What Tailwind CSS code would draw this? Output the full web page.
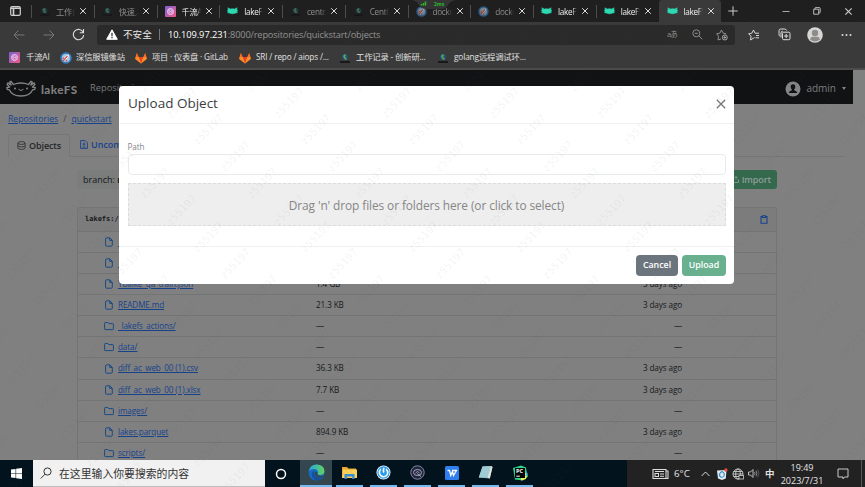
<!DOCTYPE html>
<html lang="zh">
<head>
<meta charset="utf-8">
<title>lakeFS</title>
<script src="https://cdn.jsdelivr.net/npm/@tailwindcss/browser@4"></script>
</head>
<body class="relative h-[487px] w-[865px] overflow-hidden bg-[#808080] font-['Open_Sans','Noto_Sans_CJK_SC',sans-serif] text-[9px] leading-none">
<svg class="absolute h-0 w-0">
  <defs><linearGradient id="g1" x2="1" y2="1"><stop stop-color="#7a62d8"/><stop offset="1" stop-color="#ee5a86"/></linearGradient></defs>
  <symbol id="earth" viewBox="0 0 10 10"><circle cx="5" cy="4" r="3" fill="#24527c"/><path d="M3 3Q5 0 6 2L5 4 7 6Q5 8 4 5Z" fill="#5cab4f"/><path d="M0 9h10" stroke="#111" stroke-width="1.6"/></symbol>
  <symbol id="axo" viewBox="0 0 12 8"><path d="M1 .5 3.500 1.800Q6 1.200 8.500 1.800L11 .5 10.700 3 11.800 3.600 10.800 4.500 11.300 5.800 9.500 6.200Q6 8 2.500 6.200L.7 5.800 1.200 4.500.2 3.600 1.300 3Z" fill="#2cd9b0" stroke="#2cd9b0" stroke-width=".6"/></symbol>
  <symbol id="fox" viewBox="0 0 12 12"><path d="M6 11.500 0 6.800 1.800.8 3.700 5h4.600L10.200.8 12 6.800Z" fill="#fc6d26"/><path d="M6 11.500 3.700 5h4.600Z" fill="#e24329"/><path d="M6 11.500 0 6.800 1.300 5h2.400ZM6 11.500l6-4.700L10.700 5H8.300Z" fill="#fca326" opacity=".6"/></symbol>
  <symbol id="ai" viewBox="0 0 12 12"><rect width="12" height="12" rx="1" fill="url(#g1)"/><circle cx="6" cy="6" r="3.300" fill="none" stroke="#f3d3f3"/><path d="M4 4.500 6 3.700 8 5v2L6 8.300 4.200 7ZM4 4.500 8 7M8 5 4.200 7" fill="none" stroke="#f3d3f3" stroke-width=".7"/></symbol>
  <symbol id="rocket" viewBox="0 0 12 12"><circle cx="6" cy="6" r="5.700" fill="#3480c4"/><circle cx="6" cy="6" r="4" fill="#a9c8e2"/><path d="M3 9Q4 4 9 2.500 8.500 7 3 9Z" fill="#fff"/><path d="M3 8.800 7.500 4M4 6l-1.500.5M6.500 8 6 9.500" stroke="#d3473a" stroke-width="1.200"/></symbol>
  <symbol id="x" viewBox="0 0 8 8"><path d="m1.200 1.200 5.600 5.600m0-5.600L1.200 6.800" stroke="currentColor" fill="none"/></symbol>
  <symbol id="file" viewBox="0 0 10 10"><path d="M2.500.8h3.300L8.300 3.300v5q0 .9-.9.900H2.500q-.9 0-.9-.9V1.700q0-.9.900-.9ZM5.700.9v2.500h2.500" fill="none" stroke="currentColor" stroke-width="1"/></symbol>
  <symbol id="folder" viewBox="0 0 10 10"><path d="M1.300 1.500h2.500l1 1.100h3.900q.7 0 .7.7v4.600q0 .7-.7.7H1.300q-.7 0-.7-.7V2.200q0-.7.700-.7Z" fill="none" stroke="currentColor" stroke-width="1"/></symbol>
</svg>

<!-- Browser chrome -->
<header class="h-[70px] bg-[#3a3a3a] text-white">
  <div class="flex h-[22px] bg-[#1f1f1f]">
    <div class="flex w-[31px] items-center justify-center"><svg class="h-[10px] w-[11px]" viewBox="0 0 11 10"><rect x=".7" y=".7" width="9.600" height="8.600" rx="1.400" fill="none" stroke="#d0d0d0" stroke-width="1.200"/><path d="M.7 2.300h9.600M3.500 3v6" stroke="#d0d0d0" stroke-width="1.600"/></svg></div>
    <div id="tabs" class="flex"></div>
    <div class="flex flex-1 items-center pl-[7px]"><svg class="h-[10px] w-[10px]" viewBox="0 0 10 10"><path d="M5 .3v9.400M.3 5h9.400" stroke="#ccc"/></svg>
      <svg class="ml-[44px] h-[10px] w-[8px]" viewBox="0 0 8 10"><path d="M.5 5.500h7" stroke="#ccc" stroke-width=".8"/></svg>
      <svg class="ml-[23px] h-[8px] w-[8px]" viewBox="0 0 8 8"><path d="M.7 2.200h5v5h-5ZM2 2.200V1q0-.4.500-.4h3.800q.9 0 .9.900v3.700q0 .6-.5.600H6" fill="none" stroke="#ccc" stroke-width=".9"/></svg>
      <svg class="ml-[23px] h-[9px] w-[9px] text-[#ccc]"><use href="#x"/></svg>
    </div>
  </div>
  <div class="flex h-[25px] items-center">
    <svg class="ml-[13px] h-[12px] w-[12px]" viewBox="0 0 12 12"><path d="M11.500 6H1M5.500 1.500 1 6l4.500 4.500" fill="none" stroke="#777"/></svg>
    <svg class="ml-[18px] h-[12px] w-[12px]" viewBox="0 0 12 12"><path d="M.5 6H11M6.500 1.500 11 6l-4.500 4.500" fill="none" stroke="#777"/></svg>
    <svg class="ml-[17px] h-[13px] w-[13px]" viewBox="0 0 13 13"><path d="M11.300 4.500A5.200 5.200 0 1 0 11.700 7M11.500 1v3.700H7.800" fill="none" stroke="#ddd" stroke-width="1.100"/></svg>
    <div class="ml-[12px] flex h-[20px] w-[638px] items-center rounded-[3px] bg-[#2a2a2a]">
      <svg class="ml-[9px] h-[11px] w-[12px]" viewBox="0 0 12 11"><path d="M6 .8 11.300 10.300H.7Z" fill="#fff" stroke="#fff" stroke-linejoin="round"/><path d="M6 3.800v3.400M6 8.100v1.200" stroke="#222" stroke-width="1.200"/></svg>
      <span class="ml-[5px] w-[30px] whitespace-nowrap text-[9.600px] text-[#e8e8e8]">不安全</span>
      <span class="ml-[6px] h-[11px] w-px bg-[#777]"></span>
      <span class="ml-[8px] flex-1 whitespace-nowrap text-[9.300px] tracking-[-.2px] text-[#929292]"><span class="tracking-[-.05px] text-white">10.109.97.231</span>:8000/repositories/quickstart/objects</span>
      <span class="w-[13px] text-[7.500px] tracking-[-.8px] whitespace-nowrap text-[#909090]">aあ</span>
      <svg class="ml-[12px] h-[11px] w-[11px]" viewBox="0 0 11 11"><path d="m7 7 3.300 3.300M2.800 4.300h3" stroke="#8c8c8c"/><circle cx="4.300" cy="4.300" r="3.500" fill="none" stroke="#8c8c8c"/></svg>
      <svg class="mr-[7px] ml-[13px] h-[12px] w-[12px]" viewBox="0 0 12 12"><path d="M5 10 2 11l.5-3.800L.6 4.800l3.200-.6L5.500 1l1.700 3.200 3 .6" fill="none" stroke="#999" stroke-width=".9"/><circle cx="8.800" cy="8.500" r="2.500" fill="none" stroke="#aaa"/><path d="M7.500 8.500h2.600M8.800 7.200v2.600" stroke="#aaa"/></svg>
    </div>
    <svg class="ml-[13px] h-[12px] w-[12px]" viewBox="0 0 12 12"><path d="M6.500 8.500 2.500 11l.6-3.800L.6 4.800l3.200-.6L5.500 1l1.600 3.200H11M8 6.500h3M7.500 8.800H11" fill="none" stroke="#ddd" stroke-width=".95"/></svg>
    <svg class="ml-[18px] h-[13px] w-[13px]" viewBox="0 0 13 13"><path d="M2 8.500Q.8 7.500 1 5.500V2.800Q1 1 2.800 1h3.700q1.700 0 2 1.500M3 9.500V5Q3 3.200 4.800 3.200" fill="none" stroke="#ddd"/><rect x="4.500" y="4.200" width="7.500" height="7.500" rx="1.200" fill="none" stroke="#ddd"/><path d="M8.200 6v4M6.200 8h4" stroke="#ddd"/></svg>
    <svg class="ml-[16px] h-[16px] w-[16px]" viewBox="0 0 16 16"><circle cx="8" cy="8" r="7.800" fill="#d8d6d4"/><circle cx="8" cy="6" r="3.200" fill="#8e8c8a"/><path d="M3 12.500Q3.500 9.800 5.500 9.800h5q2 0 2.500 2.700Q8 16.500 3 12.500Z" fill="#8e8c8a"/></svg>
    <svg class="ml-[18px] h-[4px] w-[11px]" viewBox="0 0 11 4"><g fill="#ddd"><circle cx="1.500" cy="2" r="1"/><circle cx="5.500" cy="2" r="1"/><circle cx="9.500" cy="2" r="1"/></g></svg>
  </div>
  <div class="flex h-[21px] items-center whitespace-nowrap text-[8.300px] tracking-[-.15px] text-[#e0e0e0]">
    <div class="ml-[9px] flex w-[51px] items-center gap-[6px]"><svg class="h-[11px] w-[11px] shrink-0"><use href="#ai"/></svg>千流AI</div>
    <div class="flex w-[75px] items-center gap-[4px]"><svg class="h-[12px] w-[12px] shrink-0"><use href="#rocket"/></svg>深信服镜像站</div>
    <div class="flex w-[104px] items-center gap-[5px] text-[8.200px]"><svg class="h-[12px] w-[12px] shrink-0"><use href="#fox"/></svg>项目 · 仪表盘 · GitLab</div>
    <div class="flex w-[101px] items-center gap-[5px] text-[8.200px]"><svg class="h-[12px] w-[12px] shrink-0"><use href="#fox"/></svg>SRI / repo / aiops /...</div>
    <div class="flex w-[98px] items-center gap-[6px] text-[8.300px]"><svg class="h-[10px] w-[10px] shrink-0"><use href="#earth"/></svg>工作记录 - 创新研...</div>
    <div class="flex items-center gap-[6px] text-[8.300px]"><svg class="h-[10px] w-[10px] shrink-0"><use href="#earth"/></svg>golang远程调试环...</div>
  </div>
  <div class="h-[2px] bg-[#4b4b4b]"></div>
</header>
<svg class="absolute top-0 left-[412px] h-[9px] w-[44px]" viewBox="0 0 44 9"><path d="M0 0h44Q38 1 36 5t-7 4H15Q9 9 7 5T0 0Z" fill="#343434"/><path d="M9.500 5.500v-1.500M11.500 5.500V3M13.500 5.500V1.500" stroke="#29b92b" stroke-width="1.500"/><text x="22" y="6" font-size="5" fill="#29b92b" font-weight="bold">2ms</text></svg>

<!-- lakeFS page under the backdrop -->
<main class="h-[390px] w-[853px] overflow-hidden text-[#16181a]">
  <nav class="flex h-[34px] items-center bg-[#101214] text-[#7e7e7e]">
    <svg class="mt-[3px] ml-[6px] h-[17px] w-[30px]" viewBox="0 0 30 17"><g fill="none" stroke="#858585" stroke-width="1.300" stroke-linecap="round"><path d="M7.500 4.500Q15 1.500 22.500 4.500M7.500 4.500 5 1.300 3.700 2l1.500 3M4.800 5 2 3l-.9 1.500L3.500 7M3.500 7.200.8 7.500l.5 2 2 .3M22.500 4.500 25 1.300l1.300.7-1.500 3M25.200 5 28 3l.9 1.500L26.500 7M26.500 7.200l2.700.3-.5 2-2 .3M3.500 10Q6 16 15 16t11.500-6"/><path d="M12.800 9.500q2.200 2.500 4.400 0" stroke-width="1"/></g><circle cx="9" cy="8.500" r="1" fill="#858585"/><circle cx="21" cy="8.500" r="1" fill="#858585"/></svg>
    <span class="ml-[5px] w-[49px] pt-[5px] font-['Lato'] text-[11.700px] font-black tracking-[.4px]">lakeFS</span>
    <span class="w-[100px] pt-[2px] text-[9.300px]">Repositories</span>
    <span class="flex-1"></span>
    <svg class="mt-[4px] h-[16px] w-[16px]" viewBox="0 0 16 16"><circle cx="8" cy="8" r="7.500" fill="#858585"/><path d="M8 3.200q2.500 0 2.300 2.800-.1 1.800-1.200 2.600v.7q2.900.5 3.200 2.700H3.700q.3-2.200 3.200-2.700v-.7Q5.800 7.800 5.700 6 5.500 3.200 8 3.200Z" fill="#101214"/></svg>
    <span class="ml-[5px] pt-[2px] text-[10px]">admin</span>
    <span class="mt-[3px] mr-[7px] ml-[6px] border-x-[2.500px] border-t-[3px] border-x-transparent border-t-[#858585]"></span>
  </nav>
  <div class="flex h-[30px] items-center pl-[8px] text-[8.700px] text-[#16428c]"><a class="underline">Repositories</a><span class="px-[5px] text-[#3c4043]">/</span><a class="underline">quickstart</a></div>
  <div class="mr-[8px] ml-[8px] flex h-[23px] text-[9px]">
    <div class="flex w-[62px] items-center rounded-t-[3px] border border-b-0 border-[#747678] pr-[4px] pb-[2px] pl-[8px] font-semibold text-[#24272a]"><svg class="mr-[3px] h-[9px] w-[9px] shrink-0" viewBox="0 0 9 9"><g fill="none" stroke="#303336" stroke-width=".9"><ellipse cx="4.500" cy="2" rx="3.600" ry="1.400"/><path d="M.9 2v5q0 1.400 3.600 1.400T8.100 7V2M.9 4.500q0 1.400 3.600 1.400t3.600-1.400"/></g></svg><span class="tracking-[-.1px]">Objects</span></div>
    <div class="flex flex-1 items-center border-b border-[#747678] pb-[1px] pl-[10px] font-semibold text-[#16428c]"><svg class="mr-[3px] h-[9px] w-[8px]" viewBox="0 0 8 9"><path d="M.6.6h4.600l2.200 2.200v5.600H.6ZM4 2.500v3.200M2.500 4.100h3M2.500 7h3" fill="none" stroke="currentColor" stroke-width=".9"/></svg>Uncommitted Changes</div>
  </div>
  <div class="ml-[77px] flex h-[50px] w-[700px] items-center justify-between pb-[6px]">
    <div class="flex h-[19px] w-[90px] items-center rounded-[2px] bg-[#7b7d7d] pl-[6px]">branch:&nbsp;<b>main</b></div>
    <div class="flex h-[19px] items-center gap-[3px] rounded-[3px] bg-[#34694e] px-[6px] font-semibold tracking-[-.1px] text-[#909e97]"><svg class="h-[7px] w-[6px]" viewBox="0 0 6 7"><path d="M3 .5v3M1.500 2 3 .5 4.500 2M.5 3.500v3h5v-3" fill="none" stroke="currentColor" stroke-width=".8"/></svg>Import</div>
  </div>
  <div class="ml-[77px] w-[700px] rounded-t-[3px] border border-[#737476]">
    <div class="flex h-[23px] items-center justify-between bg-[#7c7c7d] pr-[8px] pl-[7px] font-['DejaVu_Sans_Mono'] text-[7px] font-bold"><span>lakefs://quickstart/main/</span><svg class="h-[9px] w-[8px]" viewBox="0 0 8 9"><path d="M2.500 1.500H1v6.800h6V1.500H5.500M2.500.8h3v1.700h-3Z" fill="none" stroke="#16428c" stroke-width="1.100"/></svg></div>
    <div id="rows"></div>
  </div>
</main>

<!-- Dialog -->
<section class="absolute top-[85.500px] left-[119px] flex h-[198px] w-[615px] flex-col rounded-[4px] bg-white">
  <div class="flex h-[38px] items-center justify-between border-b border-[#eff0f1] pr-[8px] pl-[9px] text-[13.500px] text-[#3a3e42]"><span>Upload Object</span><svg class="h-[10px] w-[10px] text-[#777]" viewBox="0 0 10 10"><path d="m.8.8 8.400 8.400m0-8.400L.8 9.200" stroke="currentColor" stroke-width="1.300"/></svg></div>
  <div class="h-[122px] px-[8.500px] pt-[18px]">
    <label class="block h-[12px] text-[8.200px] leading-[10px] tracking-[-.1px] text-[#858a90]">Path</label>
    <div class="h-[21px] rounded-[4px] border border-[#e7eaed]"></div>
    <div class="mt-[8px] flex h-[43px] items-center justify-center border border-dashed border-[#dcdcdc] bg-[#eeeeee] pt-[3px] text-[11.900px] text-[#868686]"><span id="drop" class="tracking-[-.1px]">Drag 'n' drop files or folders here (or click to select)</span></div>
  </div>
  <div class="flex flex-1 items-center justify-end gap-[4px] border-t border-[#eff0f1] pr-[8px] text-[8.800px] font-semibold text-white">
    <div class="flex h-[21px] w-[42px] items-center justify-center rounded-[4px] bg-[#6c757d]">Cancel</div>
    <div class="flex h-[21px] w-[44px] items-center justify-center rounded-[4px] bg-[#69b08e]">Upload</div>
  </div>
</section>

<!-- Windows taskbar -->
<footer class="flex h-[27px] bg-[#02131d] text-[#e4e4e4]">
  <div class="flex w-[33px] items-center justify-center"><svg class="h-[11px] w-[11px]" viewBox="0 0 12 12"><path d="M0 1.700 5 1v4.700H0ZM5.600.9 12 0v5.700H5.600ZM0 6.300h5V11L0 10.300ZM5.600 6.300H12V12l-6.400-.9Z" fill="#fff"/></svg></div>
  <div class="flex w-[232px] items-center border-b border-[#bdbdbd] bg-[#f1f1f1] pl-[7px] text-[#333]"><svg class="mr-[7px] h-[12px] w-[12px]" viewBox="0 0 12 12"><circle cx="7.500" cy="4.500" r="3.600" fill="none" stroke="#333"/><path d="M5 7.200.7 11.500" stroke="#333"/></svg><span class="pt-[2px] text-[10.850px]">在这里输入你要搜索的内容</span></div>
  <div class="flex w-[35px] items-center justify-center pr-[3px]"><svg class="h-[12px] w-[12px]" viewBox="0 0 12 12"><circle cx="6" cy="6" r="4.500" fill="none" stroke="#fff" stroke-width="1.500"/></svg></div>
  <div class="flex h-full w-[32px] items-center justify-center border-b-2 border-[#76b9ed] bg-[#34474f]"><svg class="h-[17px] w-[17px]" viewBox="0 0 17 17"><defs><linearGradient id="e1" x2="1"><stop stop-color="#2ba7e0"/><stop offset="1" stop-color="#61d35a"/></linearGradient></defs><circle cx="8.500" cy="8.500" r="8" fill="#1769c2"/><path d="M.7 7.500Q2 .5 8.700.5q7.300.3 7.800 6.500-.2 4-4.500 4-3.500-.5-2-2.500Q10 5 6 5 2 5 .7 7.500Z" fill="url(#e1)"/><path d="M6.500 7Q5 12 9.500 13.500q3 1 6-1Q13 17 8 16.300 3 14 4 9q.7-1.700 2.500-2Z" fill="#14509c"/><path d="M9.500 8.500q-1 3 2.500 3.500 2 .2 4-.8l-.7 1.300q-3 1.700-6 .7-3-2-2.300-5.200 1-.8 2.500.5Z" fill="#34474f"/></svg></div>
  <div class="ml-[4px] flex h-full w-[27px] items-center justify-center border-b-2 border-[#76b9ed]"><svg class="h-[13px] w-[15px]" viewBox="0 0 15 13"><path d="M0 1h5l1.500 1.500H14v9H0Z" fill="#e8a52f"/><path d="M1 3.500h14V12H0Z" fill="#fbd35c"/><path d="M2.500 13V8h10v5h-2.300v-2.500H4.800V13Z" fill="#3c8ed4"/></svg></div>
  <div class="ml-[7px] flex h-full w-[27px] items-center justify-center border-b-2 border-[#76b9ed]"><svg class="h-[15px] w-[15px]" viewBox="0 0 15 15"><circle cx="7.500" cy="7.500" r="7" fill="#fff"/><circle cx="7.500" cy="7.500" r="6.200" fill="#2a9cee"/><path d="M4.800 4Q3 5.500 3.500 8.500 4.500 11.500 7.500 11.700q3.500 0 4.200-3.500.2-2.500-1.700-4" fill="none" stroke="#fff" stroke-width="1.500"/><path d="M8.200 3Q6.500 5 8 7.500" fill="none" stroke="#fff" stroke-width="1.500"/></svg></div>
  <div class="ml-[7px] flex h-full w-[27px] items-center justify-center border-b-2 border-[#76b9ed]"><svg class="h-[15px] w-[15px]" viewBox="0 0 15 15"><circle cx="7.500" cy="7.500" r="6.700" fill="#20253c" stroke="#8288a2"/><ellipse cx="7.500" cy="7.500" rx="4" ry="3" fill="none" stroke="#a4a9bd"/><path d="M5.500 8q2-3 4 0M7 8.500l4 3" fill="none" stroke="#a4a9bd"/></svg></div>
  <div class="ml-[7px] flex h-full w-[27px] items-center justify-center border-b-2 border-[#76b9ed]"><svg class="h-[14px] w-[14px]" viewBox="0 0 14 14"><rect width="14" height="14" rx="1.500" fill="#2e7ff0"/><path d="M2.500 4.500h2l1.300 5 1.700-4 1 4L11.500 4.500H7" fill="none" stroke="#fff" stroke-width="1.300"/></svg></div>
  <div class="ml-[7px] flex h-full w-[27px] items-center justify-center border-b-2 border-[#76b9ed]"><svg class="h-[15px] w-[15px]" viewBox="0 0 15 15"><path d="M4.500 1.500 13 1l1.500 1-2.700 11.500-11-1Z" fill="#86b6c0"/><path d="M4.500 1.500 13 1 9.500 12.500l-8.700 0Z" fill="#9fccd4"/><path d="M13 1l1.500 1-2.700 11.500-2.300-1Z" fill="#e6e2d6"/></svg></div>
  <div class="ml-[7px] flex h-full w-[27px] items-center justify-center border-b-2 border-[#76b9ed]"><svg class="h-[16px] w-[16px]" viewBox="0 0 16 16"><path d="M1 3 9 .5l5 2 .5 4 1.500 5L11 15.500l-8-1Z" fill="#2bd88b"/><path d="M9 8h6.500L14 14l-5 1.500Z" fill="#f2ee4a"/><path d="M14 5l1.500 5-2 1Z" fill="#23bce8"/><rect x="3" y="3" width="10" height="10" fill="#050505"/><text x="4" y="8.300" font-size="5.500" font-weight="bold" fill="#fff">PC</text><path d="M4.300 11.200h3.500" stroke="#fff"/></svg></div>
  <div class="ml-[94px] flex flex-1 items-center bg-[#222222]">
    <svg class="ml-[25px] h-[12px] w-[17px]" viewBox="0 0 17 12"><path d="M1 1.500h13v9H1ZM14 3h2v7.500h-3" fill="none" stroke="#ddd" stroke-width="1.100"/><path d="M3 3.500h9M8 6h4M8 8.300h4" stroke="#ddd"/><rect x="3" y="5.500" width="3.500" height="3" fill="none" stroke="#ddd"/></svg>
    <span class="ml-[5px] w-[22px] text-[9.700px] whitespace-nowrap">6°C</span>
    <svg class="ml-[5px] h-[6px] w-[9px]" viewBox="0 0 9 6"><path d="M.6 5 4.500 1l3.900 4" fill="none" stroke="#ddd"/></svg>
    <svg class="ml-[6px] h-[12px] w-[12px]" viewBox="0 0 12 12"><path d="M1 2.500 10.500 2 9.800 10.500 6 12 2 10.500Z" fill="#e3ecf2"/><path d="M6 3.500Q3 5 3.500 8M6 3.500q3 1.500 2 4.500M3.500 8q2.500 2.500 4.500 0" fill="none" stroke="#3a91c9" stroke-width="1.200"/><circle cx="9.900" cy="2" r="1.700" fill="#e04d42"/></svg>
    <svg class="ml-[4px] h-[12px] w-[12px]" viewBox="0 0 12 12"><g fill="none" stroke="#ccc" stroke-width=".9"><circle cx="6" cy="6" r="5"/><ellipse cx="6" cy="6" rx="2.300" ry="5"/><path d="M1 6h10M1.700 3.500h8.600M1.700 8.500h8.600"/></g><rect x="7" y="7.500" width="4.500" height="3.500" fill="#222" stroke="#ccc" stroke-width=".8"/></svg>
    <svg class="ml-[4px] h-[11px] w-[12px]" viewBox="0 0 12 11"><path d="M.5 4h2L5 1.500v8L2.500 7h-2Z" fill="none" stroke="#ccc" stroke-width=".9"/><path d="M6.500 4q1 1.500 0 3M8 2.800q1.800 2.700 0 5.400" fill="none" stroke="#999" stroke-width=".9"/><path d="M9.700 1.500q2.500 4 0 8" fill="none" stroke="#555"/></svg>
    <span class="ml-[5px] w-[10px] text-[9.500px] font-bold">中</span>
    <div class="ml-[4px] w-[46px] text-center text-[9px] leading-[13px] whitespace-nowrap"><div>19:49</div><div>2023/7/31</div></div>
    <svg class="ml-[12px] h-[12px] w-[12px]" viewBox="0 0 12 12"><path d="M1 1h10v8H7.500L6 10.800V9H1Z" fill="none" stroke="#ddd" stroke-width=".9"/></svg>
    <span class="ml-auto h-full w-px bg-[#555]"></span><span class="w-[3px]"></span>
  </div>
</footer>

<svg id="wm" class="pointer-events-none absolute inset-0 h-[487px] w-[865px] font-['DejaVu_Sans_Mono'] text-[10.500px]"></svg>

<script>
const tabs=[['earth','工作台',0],['earth','快速入',0],['ai','千流AI',1],['axo','lakeFS',1],['earth','centos',0],['earth','CentO',0],['rocket','docker',0],['rocket','docker',0],['axo','lakeFS',1],['axo','lakeFS',1],['axo','lakeFS',2]];
document.getElementById('tabs').innerHTML=tabs.map(([i,t,k])=>`<div class="flex h-[22px] w-[62.750px] items-center ${k==2?'rounded-t-[3px] bg-[#3a3a3a]':''}"><span class="h-[13px] w-px ${k==2?'':'bg-[#4d4d4d]'}"></span><span class="ml-[7px] flex w-[11px] justify-center"><svg class="${i=='axo'?'h-[8px] w-[11px]':i=='earth'?'h-[9px] w-[9px] opacity-60':'h-[11px] w-[11px]'} ${i=='rocket'?'opacity-60':''}"><use href="#${i}"/></svg></span><span class="ml-[6px] w-[19px] overflow-hidden text-[8.200px] leading-[13px] tracking-[-.3px] whitespace-nowrap [mask-image:linear-gradient(90deg,#000_75%,transparent)] ${k?'text-[#efefef]':'text-[#8c8c8c]'}">${t}</span><svg class="ml-[4px] h-[8px] w-[8px] text-[#ddd]"><use href="#x"/></svg></div>`).join('');
const rows=[['file','_a.json','1.2 GB'],['file','_b.json','1.3 GB'],['file','Ybaike_qa_train.json','1.4 GB'],['file','README.md','21.3 KB'],['folder','_lakefs_actions/',''],['folder','data/',''],['file','diff_ac_web_00 (1).csv','36.3 KB'],['file','diff_ac_web_00 (1).xlsx','7.7 KB'],['folder','images/',''],['file','lakes.parquet','894.9 KB'],['folder','scripts/','']];
document.getElementById('rows').innerHTML=rows.map(([i,n,s])=>`<div class="flex h-[21.080px] items-center border-t border-[#737476] pl-[26px] text-[8.150px] tracking-[-.1px] whitespace-nowrap"><svg class="h-[10px] w-[10px] text-[#174a86]"><use href="#${i}"/></svg><a class="ml-[4px] w-[198px] text-[#16428c] underline">${n}</a><span class="w-[100px]">${s||'—'}</span><span class="w-[266px] text-right">${s?'3 days ago':'—'}</span></div>`).join('');
let w='';
for(let c=-1;c<9;c++)for(let r=-1;r<5;r++)for(let k=0;k<4;k++){const x=73.500+c*107.500+k*26.900,y=102.500+r*107.300+k*26.800;w+=`<text transform="translate(${x} ${y}) rotate(-46)" text-anchor="middle" y="4" fill="#555" fill-opacity=".08">z55197</text>`}
document.getElementById('wm').innerHTML=w;
</script>
</body>
</html>
